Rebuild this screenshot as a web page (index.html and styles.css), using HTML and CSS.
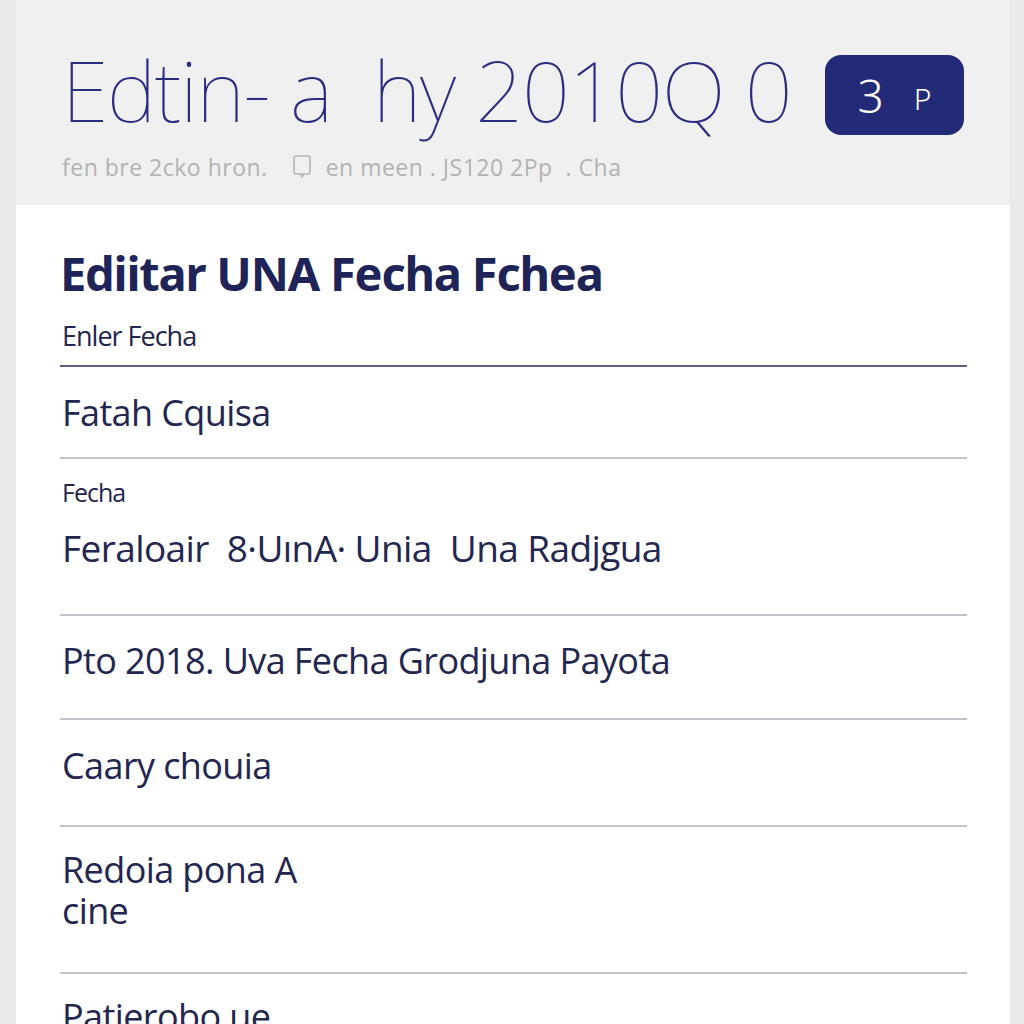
FILE: index.html
```html
<!DOCTYPE html>
<html lang="es">
<head>
  <meta name="viewport" content="width=device-width, initial-scale=1.0">
  <title>Editar una fecha</title>
  <link rel="stylesheet" href="styles.css">
</head>
<body>
  <div class="card">
    <!-- Header with title and badge -->
    <header class="top">
      <div class="top-row">
        <h1 class="big-title">Edtin- a&nbsp;&nbsp;hy 2010Q 0</h1>
        <span class="badge">3<span class="badge-p">P</span></span>
      </div>
      <p class="meta">fen bre 2cko hron.
        <svg class="meta-icon" width="20" height="26" viewBox="0 0 20 26">
          <rect x="2" y="2" width="16" height="18" rx="2" fill="none" stroke="#b5b5b5" stroke-width="1.6"/>
          <path d="M7 20 L10 24 L13 20" fill="#b5b5b5"/>
        </svg>
        en meen . JS120 2Pp&nbsp;&nbsp;. Cha</p>
    </header>

    <!-- Form body -->
    <main class="content">
      <h2 class="form-title">Ediitar UNA Fecha Fchea</h2>

      <div class="field-first">
        <label class="label">Enler Fecha</label>
      </div>

      <div class="row row-a">
        <span class="value">Fatah Cquisa</span>
      </div>

      <div class="row row-b">
        <label class="label small">Fecha</label>
        <span class="value">Feraloair&nbsp; 8·UınA· Unia&nbsp; Una Radjgua</span>
      </div>

      <div class="row row-c">
        <span class="value">Pto 2018. Uva Fecha Grodjuna Payota</span>
      </div>

      <div class="row row-d">
        <span class="value">Caary chouia</span>
      </div>

      <div class="row row-e">
        <span class="value">Redoia pona A<br>cine</span>
      </div>

      <div class="row row-f">
        <span class="value">Patierobo ue</span>
      </div>
    </main>
  </div>
</body>
</html>
```
FILE: styles.css
```css
/* Basic page */
body {
  margin: 0;
  padding: 0;
  background-color: #e9e9e9;
  font-family: "Open Sans", "Noto Sans", sans-serif;
  color: #23264f;
}

.card {
  margin: 0 14px 0 16px;
  background-color: #ffffff;
  height: 1024px;
  overflow: hidden;
}

/* Header area */
.top {
  background-color: #f0f0f0;
  padding: 42px 46px 0 46px;
  height: 163px;
}

.top-row {
  display: flex;
  align-items: flex-start;
  justify-content: space-between;
}

.big-title {
  margin: 0;
  font-family: "Noto Sans", sans-serif;
  font-weight: 100;
  font-size: 84px;
  line-height: 96px;
  color: #2b2d80;
  letter-spacing: -1.2px;
  white-space: nowrap;
}

.badge {
  display: flex;
  align-items: center;
  justify-content: center;
  gap: 30px;
  width: 139px;
  height: 80px;
  margin-top: 13px;
  border-radius: 16px;
  background-color: #232a78;
  color: #ffffff;
  font-family: "Noto Sans", sans-serif;
  font-weight: 300;
  font-size: 46px;
}

.badge-p {
  font-size: 30px;
  padding-top: 6px;
}

.meta {
  margin: 13px 0 0 0;
  font-family: "Open Sans", sans-serif;
  font-size: 23px;
  color: #b3b3b3;
  display: flex;
  align-items: center;
  gap: 6px;
  letter-spacing: 0.5px;
}

.meta-icon {
  margin: 0 8px 0 18px;
}

/* Content */
.content {
  padding: 0 43px 0 44px;
}

.form-title {
  margin: 0;
  padding-top: 40px;
  font-family: "Noto Sans", sans-serif;
  font-weight: 700;
  font-size: 47px;
  line-height: 56px;
  letter-spacing: -1.2px;
  color: #1e2358;
}

.field-first {
  padding: 18px 0 12px 2px;
  border-bottom: 2px solid #5c5f82;
}

.label {
  display: block;
  font-size: 27px;
  line-height: 34px;
  letter-spacing: -1px;
}

.label.small {
  font-size: 25px;
}

.row {
  border-bottom: 2px solid #c3c3cc;
  padding-left: 2px;
  box-sizing: border-box;
}

.value {
  display: block;
  font-size: 36px;
  line-height: 41px;
  letter-spacing: -0.6px;
}

.row-a {
  height: 92px;
  display: flex;
  align-items: center;
}

.row-b {
  height: 157px;
  padding-top: 16px;
}

.row-b .value {
  margin-top: 18px;
  font-size: 37px;
}

.row-c {
  height: 104px;
  padding-top: 24px;
}

.row-d {
  height: 107px;
  padding-top: 25px;
}

.row-e {
  height: 147px;
  padding-top: 22px;
}

.row-f {
  border-bottom: none;
  padding-top: 22px;
}
```
